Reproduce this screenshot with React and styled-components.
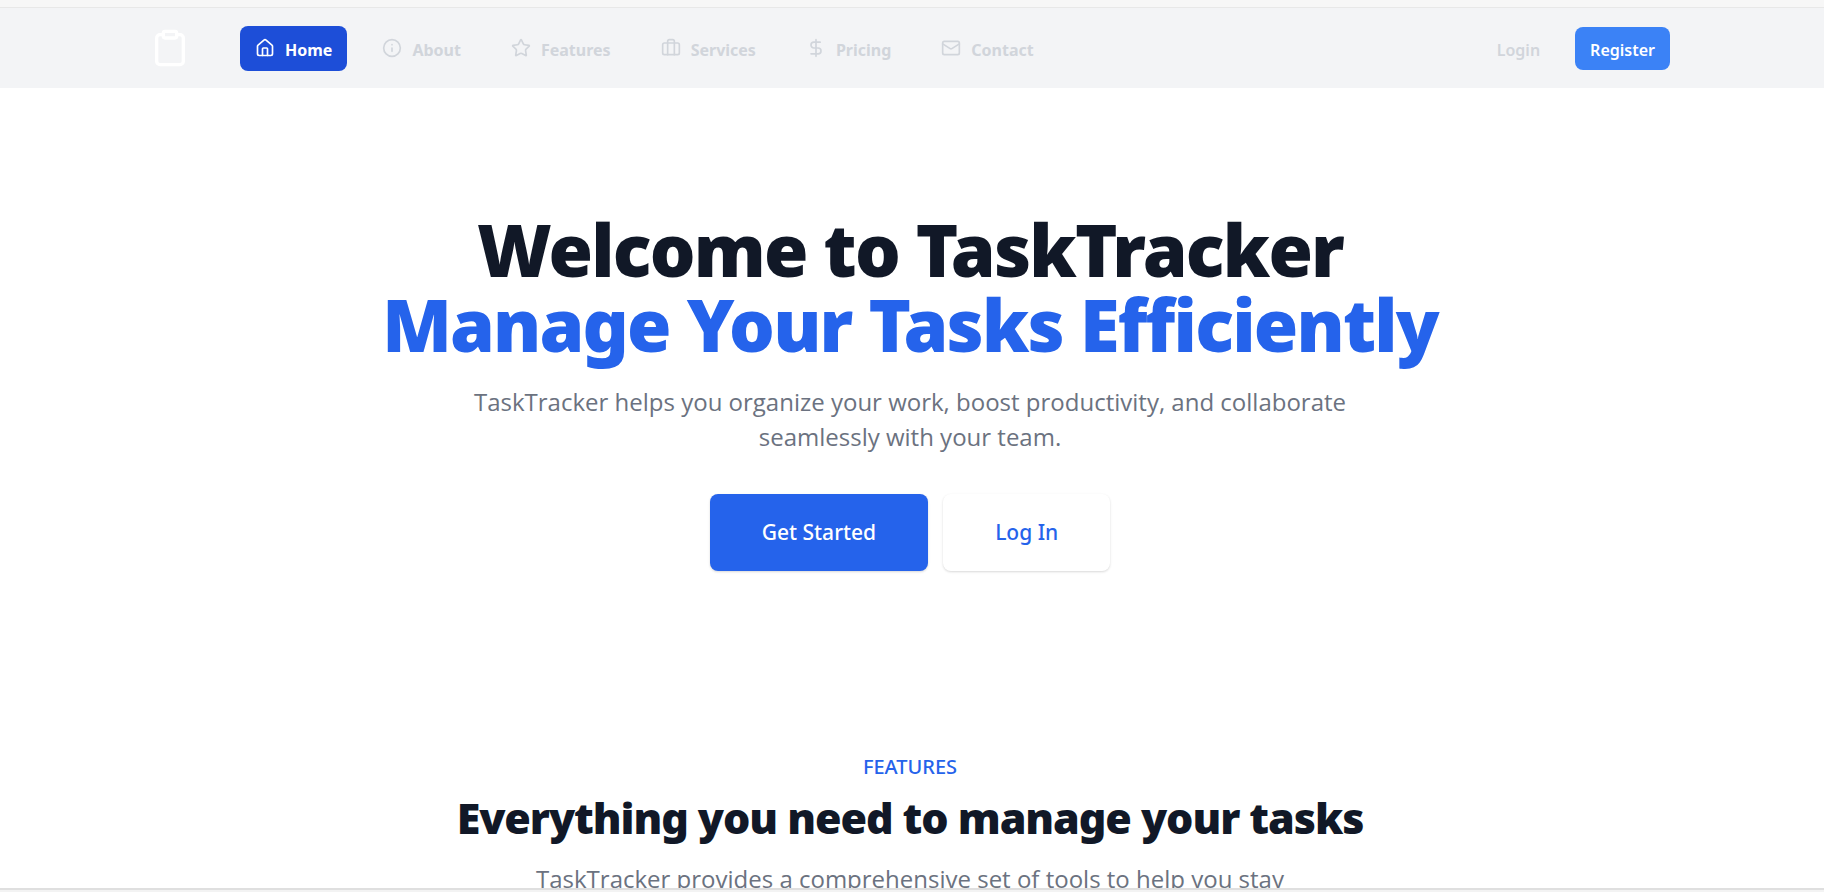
import React from "react";
import styled, { createGlobalStyle } from "styled-components";
import { Clipboard, House, Info, Star, Briefcase, DollarSign, Mail } from "lucide-react";

const GlobalStyle = createGlobalStyle`
  *, *::before, *::after { box-sizing: border-box; }
  html, body { margin: 0; }
  body {
    background: #fff;
    color: #111827;
    font-family: "Segoe UI", "Noto Sans", "Open Sans", sans-serif;
    overflow: hidden;
  }
  h1, h2, p { margin: 0; }
  a { text-decoration: none; }
`;

const Page = styled.div`
  height: 100vh;
  display: flex;
  flex-direction: column;
`;

const TopEdge = styled.div`
  flex: none;
  height: 8px;
  background: #f7f7f7;
  border-bottom: 1px solid #e8e8e8;
`;

const BottomEdge = styled.div`
  flex: none;
  height: 4px;
  background: #f3f3f3;
  border-top: 2px solid #dfdfdf;
`;

const Viewport = styled.div`
  flex: 1;
  min-height: 0;
  overflow: hidden;
`;

const Header = styled.header`
  background: #f3f4f6;
  padding-right: 4px;
`;

const Container = styled.div`
  max-width: 1600px;
  margin: 0 auto;
  padding: 0 40px;
`;

const Bar = styled(Container)`
  height: 80px;
  display: flex;
  align-items: center;
  justify-content: space-between;
`;

const Group = styled.div`
  display: flex;
  align-items: center;
  gap: ${(p) => p.$gap}px;
`;

const Logo = styled.a`
  display: flex;
  color: #fff;
`;

const Nav = styled.nav`
  display: flex;
  gap: 20px;
`;

const NavLink = styled.a`
  display: flex;
  align-items: flex-start;
  gap: 10px;
  padding: 12px 15px 8px;
  border-radius: 8px;
  font-size: 16px;
  line-height: 25px;
  font-weight: 700;
  color: ${(p) => (p.$active ? "#fff" : "#d1d5db")};
  background: ${(p) => (p.$active ? "#1d4ed8" : "transparent")};
`;

const Login = styled(NavLink)`
  font-weight: 600;
`;

const Register = styled(Login)`
  padding: 11px 15px 7px;
  color: #fff;
  background: #3b82f6;
`;

const Main = styled.main`
  padding-right: 4px;
`;

const Hero = styled(Container)`
  padding-top: 124px;
  padding-bottom: 120px;
  text-align: center;
`;

const Title = styled.h1`
  font-size: 72px;
  line-height: 75px;
  font-weight: 900;
  letter-spacing: -0.025em;
`;

const Accent = styled.span`
  display: block;
  color: #2563eb;
`;

const Lead = styled.p`
  max-width: ${(p) => p.$width}px;
  margin: ${(p) => p.$top}px auto 0;
  font-family: "Segoe UI", "Open Sans", "Noto Sans", sans-serif;
  font-size: 24px;
  line-height: 35px;
  color: #6b7280;
`;

const Actions = styled.div`
  margin-top: 40px;
  display: flex;
  justify-content: center;
  gap: 15px;
`;

const Button = styled.button`
  height: 77px;
  padding: 0 52px;
  border: 0;
  border-radius: 8px;
  font: 500 21px/35px "Segoe UI", "Noto Sans", "Open Sans", sans-serif;
  color: ${(p) => (p.$primary ? "#fff" : "#2563eb")};
  background: ${(p) => (p.$primary ? "#2563eb" : "#fff")};
  box-shadow: 0 1px 3px rgba(0, 0, 0, 0.1), 0 1px 2px rgba(0, 0, 0, 0.06);
`;

const Features = styled(Container)`
  padding-top: 60px;
  text-align: center;
`;

const Eyebrow = styled.h2`
  font-size: 20px;
  line-height: 32px;
  font-weight: 500;
  color: #2563eb;
  text-transform: uppercase;
`;

const Heading = styled.p`
  margin-top: 10px;
  font-size: 43px;
  line-height: 50px;
  font-weight: 900;
  letter-spacing: -0.025em;
`;

const links = [
  { label: "Home", icon: House, active: true },
  { label: "About", icon: Info },
  { label: "Features", icon: Star },
  { label: "Services", icon: Briefcase },
  { label: "Pricing", icon: DollarSign },
  { label: "Contact", icon: Mail },
];

export default function App() {
  return (
    <Page>
      <GlobalStyle />
      <TopEdge />
      <Viewport>
        <Header>
          <Bar>
            <Group $gap={50}>
              <Logo href="#" aria-label="TaskTracker">
                <Clipboard size={40} />
              </Logo>
              <Nav>
                {links.map(({ label, icon: Icon, active }) => (
                  <NavLink key={label} href="#" $active={active}>
                    <Icon size={20} strokeWidth={2} />
                    {label}
                  </NavLink>
                ))}
              </Nav>
            </Group>
            <Group $gap={20}>
              <Login href="#">Login</Login>
              <Register href="#">Register</Register>
            </Group>
          </Bar>
        </Header>
        <Main>
          <Hero>
            <Title>
              Welcome to TaskTracker
              <Accent>Manage Your Tasks Efficiently</Accent>
            </Title>
            <Lead $width={960} $top={22}>
              TaskTracker helps you organize your work, boost productivity, and collaborate seamlessly with your team.
            </Lead>
            <Actions>
              <Button $primary>Get Started</Button>
              <Button>Log In</Button>
            </Actions>
          </Hero>
          <Features>
            <Eyebrow>Features</Eyebrow>
            <Heading>Everything you need to manage your tasks</Heading>
            <Lead $width={840} $top={18}>
              TaskTracker provides a comprehensive set of tools to help you stay
            </Lead>
          </Features>
        </Main>
      </Viewport>
      <BottomEdge />
    </Page>
  );
}
